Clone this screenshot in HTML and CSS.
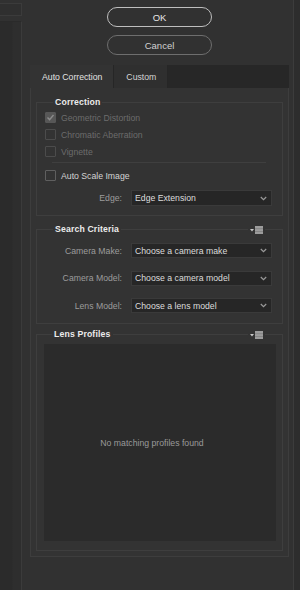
FILE: index.html
```html
<!DOCTYPE html>
<html lang="en">
<head>
    <meta charset="UTF-8">
    <meta name="viewport" content="width=device-width, initial-scale=1.0">
    <title>Lens Correction</title>
    <link rel="stylesheet" href="styles.css">
</head>
<body>
    <div class="app">
        <!-- left dock, mostly cut off -->
        <aside class="side">
            <div class="side-top"></div>
            <div class="side-panel"></div>
        </aside>

        <main class="main">
            <div class="actions">
                <button class="btn btn-ok">OK</button>
                <button class="btn btn-cancel">Cancel</button>
            </div>

            <div class="dialog">
                <div class="tabs">
                    <div class="tab tab-active">Auto Correction</div>
                    <div class="tab">Custom</div>
                </div>

                <div class="panel">
                    <!-- Correction -->
                    <fieldset class="group group-correction">
                        <legend class="group-title">Correction</legend>
                        <div class="check-row disabled">
                            <span class="check checked">
                                <svg width="9" height="9" viewBox="0 0 9 9"><polyline points="1.5,4.5 3.6,6.6 7.5,2" fill="none" stroke="#8c8c8c" stroke-width="1.4"/></svg>
                            </span>
                            <span>Geometric Distortion</span>
                        </div>
                        <div class="check-row disabled">
                            <span class="check"></span>
                            <span>Chromatic Aberration</span>
                        </div>
                        <div class="check-row disabled">
                            <span class="check"></span>
                            <span>Vignette</span>
                        </div>
                        <div class="separator"></div>
                        <div class="check-row auto-scale">
                            <span class="check"></span>
                            <span>Auto Scale Image</span>
                        </div>
                        <div class="field-row edge-row">
                            <span class="field-label">Edge:</span>
                            <div class="select">
                                <span>Edge Extension</span>
                                <svg class="chevron" width="7" height="5" viewBox="0 0 7 5"><polyline points="0.8,1 3.5,3.7 6.2,1" fill="none" stroke="#9a9a9a" stroke-width="1.2"/></svg>
                            </div>
                        </div>
                    </fieldset>

                    <!-- Search Criteria -->
                    <fieldset class="group group-search">
                        <legend class="group-title">Search Criteria</legend>
                        <span class="group-menu">
                            <svg width="13" height="8" viewBox="0 0 13 8"><polygon points="0,3 4,3 2,5.5" fill="#c8c8c8"/><rect x="5" y="0" width="8" height="8" fill="#9c9c9c"/><rect x="5" y="2.5" width="8" height="0.6" fill="#777"/><rect x="5" y="5" width="8" height="0.6" fill="#777"/></svg>
                        </span>
                        <div class="field-list">
                            <div class="field-row">
                                <span class="field-label">Camera Make:</span>
                                <div class="select">
                                    <span>Choose a camera make</span>
                                    <svg class="chevron" width="7" height="5" viewBox="0 0 7 5"><polyline points="0.8,1 3.5,3.7 6.2,1" fill="none" stroke="#9a9a9a" stroke-width="1.2"/></svg>
                                </div>
                            </div>
                            <div class="field-row">
                                <span class="field-label">Camera Model:</span>
                                <div class="select">
                                    <span>Choose a camera model</span>
                                    <svg class="chevron" width="7" height="5" viewBox="0 0 7 5"><polyline points="0.8,1 3.5,3.7 6.2,1" fill="none" stroke="#9a9a9a" stroke-width="1.2"/></svg>
                                </div>
                            </div>
                            <div class="field-row">
                                <span class="field-label">Lens Model:</span>
                                <div class="select">
                                    <span>Choose a lens model</span>
                                    <svg class="chevron" width="7" height="5" viewBox="0 0 7 5"><polyline points="0.8,1 3.5,3.7 6.2,1" fill="none" stroke="#9a9a9a" stroke-width="1.2"/></svg>
                                </div>
                            </div>
                        </div>
                    </fieldset>

                    <!-- Lens Profiles -->
                    <fieldset class="group group-profiles">
                        <legend class="group-title">Lens Profiles</legend>
                        <span class="group-menu">
                            <svg width="13" height="8" viewBox="0 0 13 8"><polygon points="0,3 4,3 2,5.5" fill="#c8c8c8"/><rect x="5" y="0" width="8" height="8" fill="#9c9c9c"/><rect x="5" y="2.5" width="8" height="0.6" fill="#777"/><rect x="5" y="5" width="8" height="0.6" fill="#777"/></svg>
                        </span>
                        <div class="profile-list">
                            <span class="empty">No matching profiles found</span>
                        </div>
                    </fieldset>
                </div>
            </div>
        </main>

        <div class="edge"></div>
    </div>
</body>
</html>
```

FILE: styles.css
```css
* {
    box-sizing: border-box;
}

body {
    margin: 0;
    padding: 0;
    background-color: #313131;
    font-family: 'Liberation Sans', Arial, sans-serif;
    font-size: 8.7px;
    color: #d6d6d6;
}

.app {
    display: flex;
    width: 300px;
    height: 590px;
    overflow: hidden;
}

/* left dock */
.side {
    width: 22px;
    flex-shrink: 0;
    display: flex;
    flex-direction: column;
}

.side-top {
    height: 13px;
    margin-top: 3px;
    border: 1px solid #3b3b3b;
    border-left: none;
    background-color: #2f2f2f;
}

.side-panel {
    flex: 1;
    margin-top: 5px;
    border-right: 1px solid #3b3b3b;
    border-top: 1px solid #2a2a2a;
    background: linear-gradient(to right, #2b2b2b 0, #2b2b2b 12px, #2e2e2e 13px, #2e2e2e 100%);
}

.main {
    flex: 1;
    padding-left: 8px;
    padding-right: 4px;
}

/* right dock edge */
.edge {
    width: 7px;
    flex-shrink: 0;
    border-left: 1px solid #3c3c3c;
    background-color: #2d2d2d;
}

.actions {
    display: flex;
    flex-direction: column;
    align-items: center;
    gap: 8px;
    padding-top: 7px;
}

.btn {
    width: 105px;
    height: 20px;
    border-radius: 10px;
    background: transparent;
    font-family: 'Liberation Sans', Arial, sans-serif;
    font-size: 9.5px;
    padding: 0;
}

.btn-ok {
    border: 1.6px solid #bebebe;
    color: #e6e6e6;
}

.btn-cancel {
    border: 1.3px solid #6e6e6e;
    color: #d2d2d2;
}

.dialog {
    margin-top: 10px;
    width: 259px;
}

.tabs {
    display: flex;
    height: 23px;
    background-color: #272727;
}

.tab {
    display: flex;
    align-items: center;
    padding: 0 11px 0 12px;
    color: #d4d4d4;
    background-color: #2f2f2f;
    border-right: 1px solid #262626;
}

.tab-active {
    background-color: #333333;
    color: #e2e2e2;
}

.panel {
    background-color: #333333;
    border: 1px solid #3d3d3d;
    border-top: none;
    padding: 8px 5px 5px 5px;
}

.group {
    position: relative;
    margin: 0;
    border: 1px solid #3e3e3e;
    padding: 1px 10px 9px 8px;
    min-width: 0;
}

.group-title {
    margin-left: 8px;
    padding: 0 2px;
    line-height: 12px;
    font-weight: bold;
    color: #ececec;
    letter-spacing: 0.15px;
}

.group-menu {
    position: absolute;
    top: -9px;
    right: 17px;
    padding: 0 2px;
    background-color: #333333;
    line-height: 0;
}

.check-row {
    display: flex;
    align-items: center;
    gap: 5px;
    height: 17px;
    color: #d4d4d4;
}

.check-row.disabled {
    color: #6c6c6c;
}

.check {
    width: 11px;
    height: 11px;
    border: 1px solid #5f5f5f;
    border-radius: 1px;
    display: flex;
    align-items: center;
    justify-content: center;
}

.check-row.disabled .check {
    border-color: #4c4c4c;
}

.check-row.disabled .check.checked {
    background-color: #575757;
    border-color: #575757;
}

.separator {
    height: 1px;
    margin: 2px 6px 0 7px;
    background-color: #3f3f3f;
}

.auto-scale {
    margin-top: 4px;
}

.field-row {
    display: grid;
    grid-template-columns: 77px 1fr;
    column-gap: 9px;
    align-items: center;
}

.edge-row {
    margin-top: 6px;
}

.edge-row .select {
    height: 16px;
}

.field-label {
    text-align: right;
    color: #9c9c9c;
}

.select {
    height: 15px;
    display: flex;
    align-items: center;
    justify-content: space-between;
    padding: 0 4px 0 3px;
    background-color: #262626;
    border: 1px solid #3a3a3a;
    color: #dcdcdc;
}

.group-search {
    margin-top: 7px;
    padding-top: 8px;
    padding-bottom: 10px;
}

.field-list {
    display: flex;
    flex-direction: column;
    gap: 12.5px;
}

.group-profiles {
    margin-top: 4px;
    padding: 4px 6px 9px 7px;
}

.profile-list {
    height: 197px;
    background-color: #2b2b2b;
    display: flex;
    align-items: center;
    justify-content: center;
    padding-right: 16px;
}

.empty {
    color: #9a9a9a;
}
```
